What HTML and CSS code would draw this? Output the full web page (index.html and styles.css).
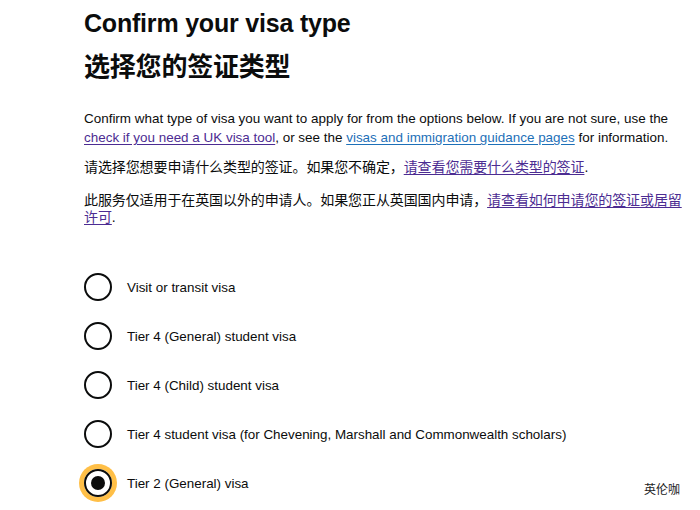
FILE: index.html
```html
<!DOCTYPE html>
<html lang="en">
<head>
<meta charset="utf-8">
<link rel="stylesheet" href="styles.css">
</head>
<body>
<main class="page">
  <h1 class="title">Confirm your visa type</h1>
  <h1 class="title title-zh">选择您的签证类型</h1>
  <p class="body en">Confirm what type of visa you want to apply for from the options below. If you are not sure, use the <a class="link visited" href="#">check if you need a UK visa tool</a>, or see the <a class="link" href="#">visas and immigration guidance pages</a> for information.</p>
  <p class="body zh">请选择您想要申请什么类型的签证。如果您不确定，<a class="link visited" href="#">请查看您需要什么类型的签证</a>.</p>
  <p class="body zh">此服务仅适用于在英国以外的申请人。如果您正从英国国内申请，<a class="link visited" href="#">请查看如何申请您的签证或居留许可</a>.</p>
  <div class="radios">
    <label class="radio"><span class="circle"></span><span class="label">Visit or transit visa</span></label>
    <label class="radio"><span class="circle"></span><span class="label">Tier 4 (General) student visa</span></label>
    <label class="radio"><span class="circle"></span><span class="label">Tier 4 (Child) student visa</span></label>
    <label class="radio"><span class="circle"></span><span class="label">Tier 4 student visa (for Chevening, Marshall and Commonwealth scholars)</span></label>
    <label class="radio"><span class="circle checked"></span><span class="label">Tier 2 (General) visa</span></label>
  </div>
</main>
<div class="watermark">英伦咖</div>
</body>
</html>
```
FILE: styles.css
```css
html, body { margin: 0; padding: 0; background: #fff; }
body {
  font-family: "Liberation Sans", "Noto Sans CJK SC", sans-serif;
  color: #0b0c0c;
  width: 700px;
  height: 510px;
  overflow: hidden;
  position: relative;
}
.page { padding: 0 0 0 84px; width: 606px; }
.title {
  font-size: 25px;
  font-weight: 700;
  line-height: 32px;
  margin: 7px 0 0;
  letter-spacing: -0.2px;
}
.title-zh { margin-top: 12px; font-size: 26px; }
.body {
  font-size: 14px;
  line-height: 19px;
  margin: 0 0 12px;
}
.body.en { font-size: 13.45px; margin-top: 26px; }
.body.zh { line-height: 17px; margin-bottom: 16px; letter-spacing: -0.1px; }
.link { color: #1d70b8; text-decoration: underline; text-underline-offset: 2px; }
.link.visited { color: #4c2c92; }
.radios {
  display: flex;
  flex-direction: column;
  gap: 21px;
  margin-top: 47px;
}
.radio { display: flex; align-items: center; gap: 15px; }
.circle {
  box-sizing: border-box;
  width: 28px;
  height: 28px;
  border: 2px solid #0b0c0c;
  border-radius: 50%;
  display: flex;
  align-items: center;
  justify-content: center;
  flex: none;
}
.circle.checked { box-shadow: 0 0 0 5px #ffbf47; }
.circle.checked::after {
  content: "";
  width: 14px;
  height: 14px;
  border-radius: 50%;
  background: #0b0c0c;
}
.label { font-size: 13.4px; }
.watermark {
  position: absolute;
  left: 644px;
  top: 480px;
  font-size: 12px;
  font-family: "Noto Sans CJK SC", sans-serif;
  color: #222;
}
```
